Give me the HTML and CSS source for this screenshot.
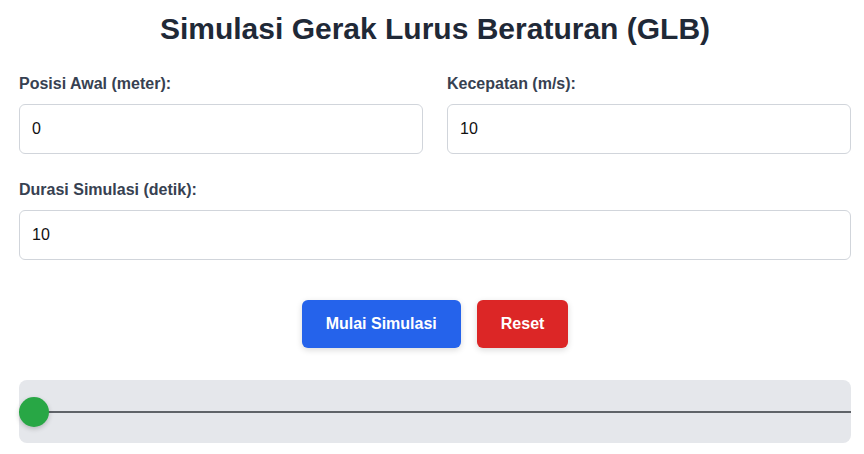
FILE: index.html
```html
<!DOCTYPE html>
<html lang="id">
<head>
    <meta charset="UTF-8">
    <meta name="viewport" content="width=device-width, initial-scale=1.0">
    <title>Simulasi GLB</title>
    <link rel="stylesheet" href="styles.css">
</head>
<body>
    <div class="container">
        <h1>Simulasi Gerak Lurus Beraturan (GLB)</h1>

        <div class="form-grid">
            <div class="field">
                <label for="posisiAwal">Posisi Awal (meter):</label>
                <input type="number" id="posisiAwal" value="0">
            </div>
            <div class="field">
                <label for="kecepatan">Kecepatan (m/s):</label>
                <input type="number" id="kecepatan" value="10">
            </div>
            <div class="field full">
                <label for="durasi">Durasi Simulasi (detik):</label>
                <input type="number" id="durasi" value="10">
            </div>
        </div>

        <div class="buttons">
            <button class="btn btn-start">Mulai Simulasi</button>
            <button class="btn btn-reset">Reset</button>
        </div>

        <div class="track">
            <div class="ball"></div>
        </div>
    </div>
</body>
</html>
```

FILE: styles.css
```css
body {
    margin: 0;
    font-family: "Liberation Sans", Arial, sans-serif;
    background: #ffffff;
    color: #1f2937;
}

.container {
    padding: 11px 13px 20px 19px;
}

h1 {
    margin: 0 0 25px;
    font-size: 30px;
    line-height: 36px;
    text-align: center;
    color: #1f2937;
}

.form-grid {
    display: grid;
    grid-template-columns: 1fr 1fr;
    gap: 24px;
}

.field.full {
    grid-column: 1 / -1;
}

.field label {
    display: block;
    margin-bottom: 8px;
    font-size: 16px;
    line-height: 24px;
    font-weight: bold;
    color: #374151;
}

.field input {
    display: block;
    width: 100%;
    box-sizing: border-box;
    padding: 12px;
    font-family: inherit;
    font-size: 16px;
    line-height: 24px;
    color: #111111;
    border: 1px solid #d1d5db;
    border-radius: 6px;
    background: #ffffff;
    outline: none;
    appearance: textfield;
    -moz-appearance: textfield;
}

.field input::-webkit-outer-spin-button,
.field input::-webkit-inner-spin-button {
    -webkit-appearance: none;
    margin: 0;
}

.buttons {
    display: flex;
    justify-content: center;
    gap: 16px;
    margin: 40px 0 32px;
}

.btn {
    padding: 12px 24px;
    font-family: inherit;
    font-size: 16px;
    line-height: 24px;
    font-weight: bold;
    color: #ffffff;
    border: none;
    border-radius: 6px;
    cursor: pointer;
    box-shadow: 0 2px 6px rgba(0, 0, 0, 0.15);
}

.btn-start {
    background: #2563eb;
}

.btn-reset {
    background: #dc2626;
}

.track {
    position: relative;
    height: 63px;
    background: #e5e7eb;
    border-radius: 8px;
}

.track::before {
    content: "";
    position: absolute;
    left: 0;
    right: 0;
    top: 50%;
    height: 2px;
    margin-top: -1px;
    background: #5f6368;
}

.ball {
    position: absolute;
    left: 0;
    top: 50%;
    width: 30px;
    height: 30px;
    margin-top: -15px;
    border-radius: 50%;
    background: #28a745;
    box-shadow: 0 2px 5px rgba(0, 0, 0, 0.2);
}
```
